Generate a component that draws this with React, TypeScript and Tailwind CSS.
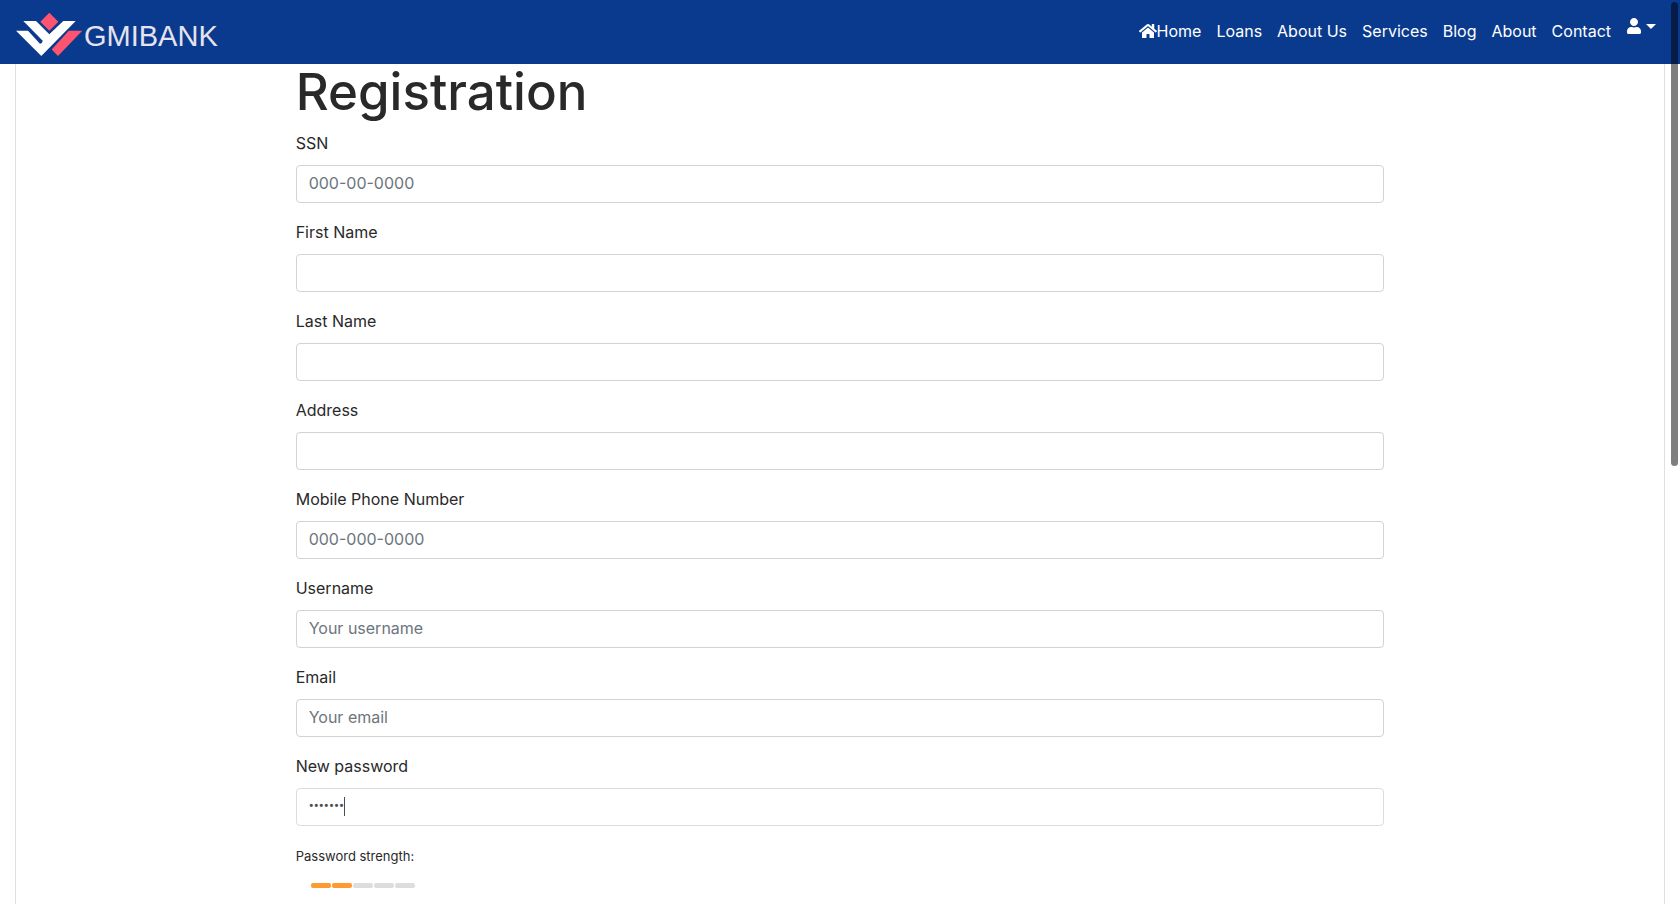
import { FaHome, FaUser } from "react-icons/fa";

const links = ["Loans", "About Us", "Services", "Blog", "About", "Contact"];

const fields = [
  { id: "ssn", label: "SSN", type: "text", placeholder: "000-00-0000" },
  { id: "firstName", label: "First Name", type: "text", placeholder: "" },
  { id: "lastName", label: "Last Name", type: "text", placeholder: "" },
  { id: "address", label: "Address", type: "text", placeholder: "" },
  { id: "phone", label: "Mobile Phone Number", type: "text", placeholder: "000-000-0000" },
  { id: "username", label: "Username", type: "text", placeholder: "Your username" },
  { id: "email", label: "Email", type: "email", placeholder: "Your email" },
];

const strength = [true, true, false, false, false];

function Logo() {
  return (
    <a href="#" className="flex items-center pt-0.5" aria-label="GMIBANK">
      <svg width="68" height="46" viewBox="0 0 68 46" aria-hidden="true">
        <path fill="#ff5470" d="M33.3 2.700 42.300 11.700 33.300 20.700 24.300 11.700Z" />
        <path
          fill="#fff"
          d="M7.300 11H20L33.300 24.300 47.300 11H59.700L25.300 46 0 20.700H12L24 33.700Q26.500 33.500 26.700 30.700Z"
        />
        <path fill="#ff5470" d="M66.300 20.700H52.700L35.700 39.500 42 46Z" />
      </svg>
      <span className="pt-1.5 font-['Liberation_Sans',sans-serif] text-[29px] leading-8 text-[#e6e3ee]">GMIBANK</span>
    </a>
  );
}

export default function App() {
  return (
    <div className="relative flex min-h-screen flex-col overflow-hidden bg-white font-['Inter',sans-serif] text-base text-[#292929]">
      <header className="flex h-16 items-center justify-between bg-[#0a3a8d] pr-6 pl-4 text-white">
        <Logo />
        <nav className="flex items-center gap-[15px] pb-0.5">
          <a href="#" className="flex items-center">
            <FaHome className="size-[18px]" />
            Home
          </a>
          {links.map((l) => (
            <a key={l} href="#">
              {l}
            </a>
          ))}
          <button type="button" aria-label="Account" className="mb-2.5 flex items-center gap-1">
            <FaUser className="size-4" />
            <svg width="10" height="5" viewBox="0 0 10 5" aria-hidden="true">
              <path fill="currentColor" d="M0 0H10L5 5Z" />
            </svg>
          </button>
        </nav>
      </header>

      <main className="mx-[15px] grow border-x border-[#dfdfdf]">
        <div className="-mx-[15px] flex justify-center">
          <form className="w-2/3 px-[15px]">
            <h1 className="mb-2.5 text-[51px] leading-[56px] font-medium">Registration</h1>
            {fields.map((f) => (
              <div key={f.id} className="mb-4">
                <label htmlFor={f.id} className="mb-2 block leading-[27px]">
                  {f.label}
                </label>
                <input
                  id={f.id}
                  type={f.type}
                  placeholder={f.placeholder}
                  className="block h-[38px] w-full rounded border border-[#ced4da] px-3 pb-0.5 text-[#495057] placeholder:text-[#6c757d]"
                />
              </div>
            ))}
            <div className="mb-4">
              <label htmlFor="password" className="mb-2 block leading-[27px]">
                New password
              </label>
              <div className="relative">
                <input
                  id="password"
                  type="password"
                  defaultValue="secret1"
                  className="block h-[38px] w-full rounded border border-[#dcdcdc] px-3 pb-0.5 font-['Roboto',sans-serif] text-[15px] text-[#495057]"
                />
                <span className="absolute top-[9px] left-12 h-[19px] w-px bg-[#495057]" />
              </div>
            </div>
            <div>
              <p className="text-[13px] leading-7">Password strength:</p>
              <ul className="mt-[13px] ml-[15px] flex gap-px">
                {strength.map((on, i) => (
                  <li key={i} className={on ? "h-[5px] w-5 rounded-xs bg-[#ff9933]" : "h-[5px] w-5 rounded-xs bg-[#dddddd]"} />
                ))}
              </ul>
            </div>
          </form>
        </div>
      </main>

      <div className="absolute top-0.5 right-0.5 h-[464px] w-[7px] rounded-full bg-black/50" />
    </div>
  );
}
